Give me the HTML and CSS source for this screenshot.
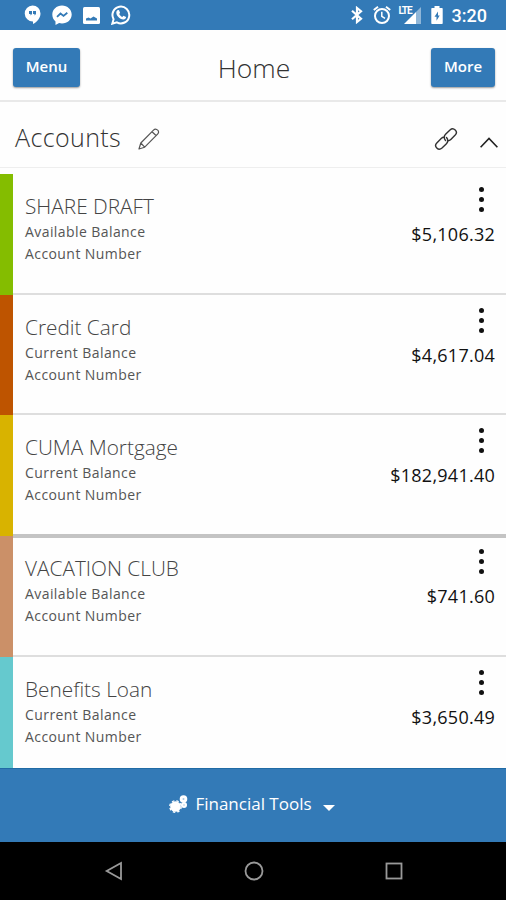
FILE: index.html
```html
<!DOCTYPE html>
<html lang="en">
<head>
    <meta charset="UTF-8">
    <meta name="viewport" content="width=device-width, initial-scale=1.0">
    <title>Home</title>
    <link rel="stylesheet" href="styles.css">
</head>
<body>

    <div class="status-bar">
        <div class="status-left">
            <svg width="17" height="20" viewBox="0 0 17 20"><path fill="#fff" d="M8.500 0.500a8 8 0 0 1 8 8c0 4.600-3.500 8.500-7.500 10.500v-2.500a8 8 0 1 1-.5-16z"/><path fill="#337ab7" d="M5 6h3v3l-1.500 1.500V9H5zM9 6h3v3l-1.500 1.500V9H9z"/></svg>
            <svg width="20" height="20" viewBox="0 0 20 20"><path fill="#fff" d="M10 0.500c5.500 0 9.700 4 9.700 9s-4.200 9-9.700 9c-1 0-2-.1-2.900-.4L3.500 20v-3.500C1.500 14.800.3 12.300.3 9.500c0-5 4.200-9 9.700-9z"/><path fill="none" stroke="#337ab7" stroke-width="1.800" d="M5 11.800l3.500-3.300 3 2.400 3.800-3.200"/></svg>
            <svg width="17" height="17" viewBox="0 0 17 17"><rect width="17" height="17" rx="1.500" fill="#fff"/><path fill="#337ab7" d="M3 13.500v-2l2.500-1 2 1 3-2 3.500 2v2z"/></svg>
            <svg width="20" height="20" viewBox="0 0 20 20"><path fill="none" stroke="#fff" stroke-width="2" d="M1.300 18.700l1.300-4.500a8.400 8.400 0 1 1 3.300 3.200z"/><path fill="#fff" d="M6.300 5.300l1.600-.3 1.200 2.800-.9 1.200c.8 1.500 1.700 2.400 3.100 3l1.100-1.200 2.700 1.300c-.1 1.700-1.300 2.500-2.800 2.400-3.800-.5-7-3.700-7-7 0-.9.400-1.700 1-2.200z"/></svg>
        </div>
        <div class="status-right">
            <svg width="12" height="18" viewBox="0 0 12 18"><path fill="none" stroke="#fff" stroke-width="2.200" d="M1 4.800l9 8L6 16v-14l4 3.200-9 8"/></svg>
            <svg class="alarm" width="18" height="18" viewBox="0 0 18 18"><g fill="none" stroke="#fff" stroke-width="2"><circle cx="9" cy="10" r="7"/><path d="M.8 4L5 .8M17.200 4L13 .8"/><path stroke-width="1.500" d="M8.800 5.800v4.500l3.200 2"/></g></svg>
            <span class="signal"><span class="lte">LTE</span><svg width="17" height="17" viewBox="0 0 17 17"><path fill="#8fb6d8" d="M12 5l5-5v17h-5z"/><path fill="#fff" d="M0 17L12 5v12z"/></svg></span>
            <svg class="battery" width="12" height="18" viewBox="0 0 12 18"><path fill="#fff" d="M3.500 0h5v2H11q.7 0 .7.700v14.600q0 .7-.7.700H1q-.7 0-.7-.7V2.700Q.3 2 1 2h2.500z"/><path fill="#337ab7" d="M7 5.500L3.500 10.700h2v4L8.700 9.500H7z"/></svg>
            <span class="clock">3:20</span>
        </div>
    </div>

    <header class="header">
        <button class="btn btn-menu">Menu</button>
        <h1>Home</h1>
        <button class="btn btn-more">More</button>
    </header>

    <div class="section-head">
        <h2>Accounts</h2>
        <svg class="pencil" width="22" height="22" viewBox="0 0 22 22"><path fill="none" stroke="#555" stroke-width="1.200" stroke-linejoin="round" d="M1 21l1.800-6L15.500 2.200q1.500-1.500 3.200-.7 2 1 1.900 2.600 0 1-1 2L6.700 19.200zM2.800 15l3.900 4.200M14 3.700l4.300 4.100"/></svg>
        <svg class="link" width="24" height="24" viewBox="0 0 24 24"><g fill="none" stroke="#333" stroke-width="1.400" stroke-linecap="round"><path d="M11.500 13.500c-2-2.500-1.500-4.600.3-6.400l4.200-4.200c1.700-1.600 3.700-1.500 5.200 0s1.600 3.500 0 5.200l-4.400 4.400c-.8.800-1.700 1.200-2.700 1.200"/><path d="M12.500 10.500c2 2.500 1.500 4.600-.3 6.400l-4.200 4.200c-1.700 1.600-3.700 1.500-5.200 0s-1.600-3.500 0-5.200l4.400-4.400c.8-.8 1.700-1.200 2.700-1.200"/></g></svg>
        <svg class="chevron" width="18" height="11" viewBox="0 0 18 11"><path fill="none" stroke="#222" stroke-width="1.600" d="M.6 10.200L9 1.500l8.400 8.700"/></svg>
    </div>

    <div class="accounts">
        <div class="account green">
            <div class="info">
                <h3>SHARE DRAFT</h3>
                <p>Available Balance</p>
                <p>Account Number</p>
            </div>
            <div class="side">
                <div class="dots"><i></i><i></i><i></i></div>
                <span class="amount">$5,106.32</span>
            </div>
        </div>
        <div class="account orange">
            <div class="info">
                <h3>Credit Card</h3>
                <p>Current Balance</p>
                <p>Account Number</p>
            </div>
            <div class="side">
                <div class="dots"><i></i><i></i><i></i></div>
                <span class="amount">$4,617.04</span>
            </div>
        </div>
        <div class="account yellow">
            <div class="info">
                <h3>CUMA Mortgage</h3>
                <p>Current Balance</p>
                <p>Account Number</p>
            </div>
            <div class="side">
                <div class="dots"><i></i><i></i><i></i></div>
                <span class="amount">$182,941.40</span>
            </div>
        </div>
        <div class="account tan">
            <div class="info">
                <h3>VACATION CLUB</h3>
                <p>Available Balance</p>
                <p>Account Number</p>
            </div>
            <div class="side">
                <div class="dots"><i></i><i></i><i></i></div>
                <span class="amount">$741.60</span>
            </div>
        </div>
        <div class="account teal">
            <div class="info">
                <h3>Benefits Loan</h3>
                <p>Current Balance</p>
                <p>Account Number</p>
            </div>
            <div class="side">
                <div class="dots"><i></i><i></i><i></i></div>
                <span class="amount">$3,650.49</span>
            </div>
        </div>
    </div>

    <footer class="tools">
        <svg width="19" height="19" viewBox="0 0 19 19"><g fill="#fff"><circle cx="6.500" cy="11.500" r="5.300"/><circle cx="6.500" cy="11.500" r="5.700" fill="none" stroke="#fff" stroke-width="1.400" stroke-dasharray="2.500 2"/><circle cx="14.500" cy="4" r="3.800"/><circle cx="15" cy="10" r="3"/></g><circle cx="14.500" cy="4" r="1" fill="#a9c6e0"/><circle cx="15" cy="10" r=".8" fill="#a9c6e0"/></svg>
        <span>Financial Tools</span>
        <i class="caret"></i>
    </footer>

    <nav class="nav-bar">
        <svg width="20" height="20" viewBox="0 0 20 20"><path d="M18 2v16L3.700 10z"/></svg>
        <svg width="20" height="20" viewBox="0 0 20 20"><circle cx="10" cy="10" r="8.500"/></svg>
        <svg width="20" height="20" viewBox="0 0 20 20"><rect x="2.500" y="2.500" width="15" height="15"/></svg>
    </nav>

</body>
</html>
```
FILE: styles.css
```css
* {
    box-sizing: border-box;
}
body {
    margin: 0;
    height: 900px;
    overflow: hidden;
    display: flex;
    flex-direction: column;
    background-color: #fefefe;
    font-family: "Open Sans", sans-serif;
}
h1, h2, h3, p {
    margin: 0;
    font-weight: 300;
    white-space: nowrap;
}
svg {
    display: block;
    flex: none;
}
.status-bar {
    height: 30px;
    flex: none;
    display: flex;
    justify-content: space-between;
    padding: 0 18px 0 24px;
    background-color: #337ab7;
    color: white;
}
.status-left, .status-right {
    display: flex;
    align-items: center;
}
.status-left {
    gap: 11px;
}
.alarm {
    margin-left: 10px;
}
.signal {
    display: flex;
    align-items: flex-end;
    height: 18px;
    margin-left: 7px;
}
.lte {
    align-self: flex-start;
    margin-right: -8px;
    font: bold 10px/9px Roboto, sans-serif;
    letter-spacing: -1px;
}
.battery {
    margin-left: 10px;
}
.clock {
    margin-left: 9px;
    font: 500 18px/20px Roboto, sans-serif;
    padding-top: 2px;
    margin-right: 1px;
}
.header {
    height: 72px;
    flex: none;
    display: flex;
    justify-content: space-between;
    align-items: center;
    padding: 4px 11px 0 13px;
    border-bottom: 2px solid #e9e9e9;
}
.header h1 {
    margin: 1px 3px 0 0;
    font-size: 26.500px;
    color: #333;
}
.btn {
    height: 39px;
    padding: 0 0 2px;
    border: none;
    border-radius: 3px;
    background-color: #337ab7;
    box-shadow: 0 1px 2px rgba(0, 0, 0, 0.4);
    color: white;
    font: 600 15px "Open Sans", sans-serif;
}
.btn-menu {
    width: 67px;
}
.btn-more {
    width: 64px;
}
.section-head {
    height: 66px;
    flex: none;
    display: flex;
    align-items: center;
    padding: 8px 8px 0 15px;
    border-bottom: 1px solid #eee;
}
.section-head h2 {
    margin-top: -3px;
    font-size: 25px;
    letter-spacing: 0.4px;
    color: #333;
}
.pencil {
    margin-left: 17px;
}
.link {
    margin-left: auto;
}
.chevron {
    margin: 7px 0 0 22px;
}
.accounts {
    height: 600px;
    flex: none;
    padding-top: 6px;
    overflow: hidden;
}
.account {
    height: 120.66px;
    display: flex;
    justify-content: space-between;
    padding: 18px 11px 0 12px;
    border-left: 13px solid;
    background-image: linear-gradient(#dedede, #dedede);
    background-size: 100% 2px;
    background-position: left bottom;
    background-repeat: no-repeat;
}
.green {
    border-left-color: #84bd00;
}
.orange {
    border-left-color: #be5400;
}
.yellow {
    border-left-color: #d8b300;
    background-image: linear-gradient(#c4c4c4, #c4c4c4);
    box-shadow: 0 2px 0 #c4c4c4;
}
.tan {
    border-left-color: #cb9068;
}
.teal {
    border-left-color: #65c9ce;
}
.info h3 {
    font-size: 20.800px;
    line-height: 29px;
    color: #444;
}
.info p {
    font-size: 14px;
    line-height: 22px;
    font-weight: 400;
    letter-spacing: 0.42px;
    color: #555;
}
.side {
    display: flex;
    flex-direction: column;
    align-items: flex-end;
}
.dots {
    display: flex;
    flex-direction: column;
    gap: 5px;
    margin: -5px 11px 0 0;
}
.dots i {
    width: 5px;
    height: 5px;
    border-radius: 50%;
    background-color: #111;
}
.amount {
    margin-top: 9px;
    font-size: 18px;
    line-height: 26px;
    letter-spacing: 0.25px;
    color: #111;
}
.tools {
    height: 74px;
    flex: none;
    display: flex;
    align-items: center;
    justify-content: center;
    padding-right: 2px;
    border-top: 1px solid #206ba5;
    background-color: #337ab7;
    color: white;
    font-size: 17px;
}
.tools svg {
    margin-top: -3px;
}
.tools span {
    margin: 0 11px 4px 7px;
}
.caret {
    margin-top: 4px;
    border: 6px solid transparent;
    border-top-color: white;
    border-bottom: 0;
}
.nav-bar {
    height: 58px;
    flex: none;
    display: flex;
    align-items: center;
    justify-content: space-between;
    padding: 0 102px 0 103px;
    background-color: black;
}
.nav-bar svg {
    fill: none;
    stroke: #999;
    stroke-width: 1.800;
}
```
